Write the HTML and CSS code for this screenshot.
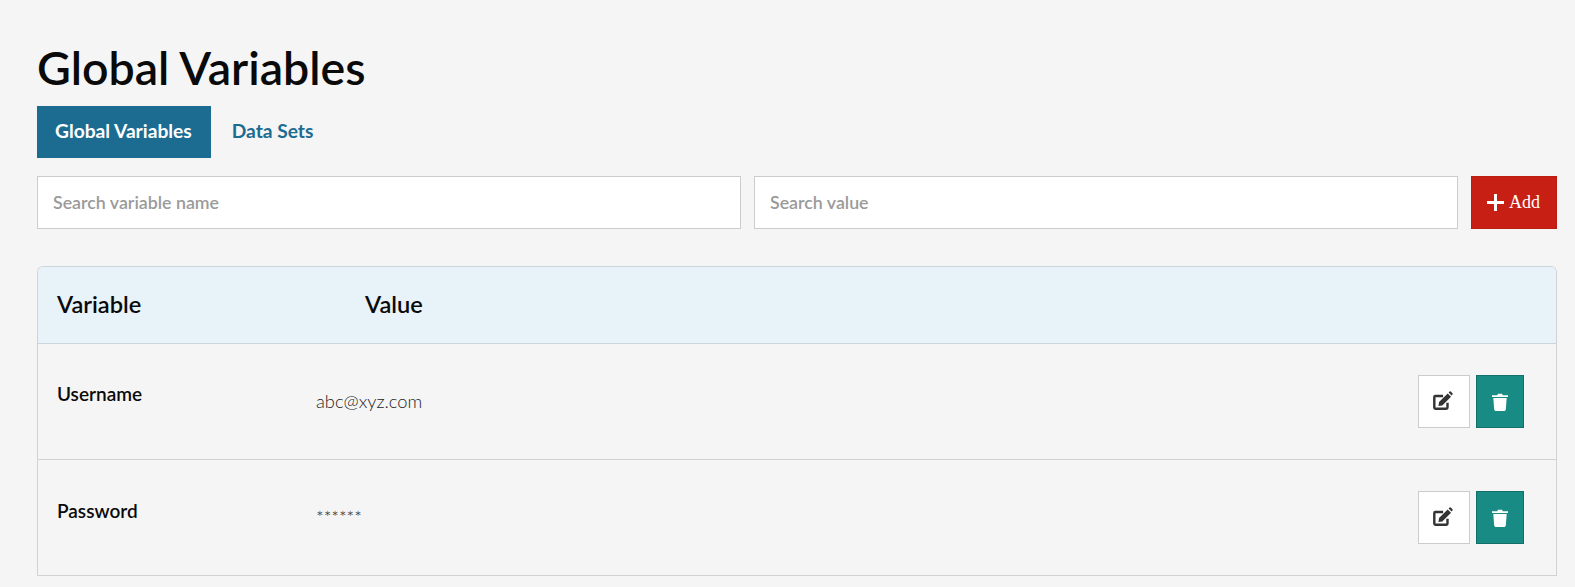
FILE: index.html
```html
<!DOCTYPE html>
<html lang="en">
<head>
<meta charset="utf-8">
<title>Global Variables</title>
<link rel="stylesheet" href="styles.css">
</head>
<body>
<main class="page">
  <h1 class="title">Global Variables</h1>
  <nav class="tabs">
    <a class="tab tab-active">Global Variables</a>
    <a class="tab">Data Sets</a>
  </nav>
  <div class="filters">
    <input class="search" type="text" placeholder="Search variable name">
    <input class="search" type="text" placeholder="Search value">
    <button class="add" type="button">
      <svg class="add-icon" viewBox="0 0 16 16" width="17" height="17"><path fill="#fff" d="M6.600 0h2.800v6.600H16v2.800H9.400V16H6.600V9.400H0V6.600h6.600z"/></svg>
      <span>Add</span>
    </button>
  </div>
  <section class="card">
    <header class="card-head">
      <div class="head-var">Variable</div>
      <div class="head-val">Value</div>
    </header>
    <div class="row">
      <div class="name">Username</div>
      <div class="value">abc@xyz.com</div>
      <div class="actions">
        <button class="btn-edit" type="button">
          <svg class="edit-icon" viewBox="0 0 20 20" width="22" height="22"><path fill="none" stroke="#333" stroke-width="2.200" d="M15 11.500V16a1 1 0 0 1-1 1H4a1 1 0 0 1-1-1V6.500a1 1 0 0 1 1-1h7"/><path fill="#333" d="M7.300 11 15.200 3.100l3 3-7.900 7.900-3.500.5zM16 2.300l.9-.9a.8.8 0 0 1 1.100 0l1.500 1.500a.8.8 0 0 1 0 1.100l-.8.900z"/></svg>
        </button>
        <button class="btn-del" type="button">
          <svg viewBox="0 0 16 18" width="16" height="18"><path fill="#fff" d="M0 2.200h5.200L6 .7h4l.8 1.500H16v1.800H0zM1.300 5h13.400l-.9 11.500a1.500 1.500 0 0 1-1.500 1.400H3.700a1.500 1.500 0 0 1-1.500-1.400z"/></svg>
        </button>
      </div>
    </div>
    <div class="row">
      <div class="name name-low">Password</div>
      <div class="value value-mask">******</div>
      <div class="actions">
        <button class="btn-edit" type="button">
          <svg class="edit-icon" viewBox="0 0 20 20" width="22" height="22"><path fill="none" stroke="#333" stroke-width="2.200" d="M15 11.500V16a1 1 0 0 1-1 1H4a1 1 0 0 1-1-1V6.500a1 1 0 0 1 1-1h7"/><path fill="#333" d="M7.300 11 15.200 3.100l3 3-7.900 7.900-3.500.5zM16 2.300l.9-.9a.8.8 0 0 1 1.100 0l1.500 1.500a.8.8 0 0 1 0 1.100l-.8.900z"/></svg>
        </button>
        <button class="btn-del" type="button">
          <svg viewBox="0 0 16 18" width="16" height="18"><path fill="#fff" d="M0 2.200h5.200L6 .7h4l.8 1.500H16v1.800H0zM1.300 5h13.400l-.9 11.500a1.500 1.500 0 0 1-1.500 1.400H3.700a1.500 1.500 0 0 1-1.500-1.400z"/></svg>
        </button>
      </div>
    </div>
  </section>
</main>
</body>
</html>
```

FILE: styles.css
```css
* { box-sizing: border-box; }
html, body { margin: 0; height: 100%; overflow: hidden; }
body { background: #f5f5f5; color: #0a0a0a; font-family: Lato, "Liberation Sans", sans-serif; }
.page { padding: 39px 18px 0 37px; }
.title { margin: 0 0 11px; font-size: 46.500px; line-height: 56px; font-weight: 600; color: #0a0a0a; }
.tabs { display: flex; height: 52px; margin-bottom: 18px; }
.tab { display: flex; align-items: center; padding: 0 19px 4px 18px; font-size: 19.200px; font-weight: 700; color: #1c6c92; margin-right: 3px; }
.tab-active { background: #1c6c92; color: #fff; }
.filters { display: flex; gap: 13px; height: 53px; margin-bottom: 37px; }
.search { flex: 1 1 0; min-width: 0; height: 53px; padding: 0 15px 2px; border: 1px solid #ccc; background: #fff; font: 600 17.800px Lato, sans-serif; color: #333; outline: 0; }
.search::placeholder { color: #9a9a9a; opacity: 1; }
.add { flex: 0 0 86px; display: flex; align-items: center; justify-content: center; gap: 5px; padding: 0 1px 0 0; border: 1px solid #b81e12; background: #c81f14; color: #fff; font: 400 18px "Liberation Serif", serif; }
.add-icon { display: block; }
.card { border: 1px solid #d2d2d2; border-top-color: #c9d6e0; border-radius: 6px 6px 0 0; }
.card-head { display: flex; align-items: center; height: 77px; padding: 0 0 2px 19px; background: #e8f3f9; border-bottom: 1px solid #c9d6e0; border-radius: 5px 5px 0 0; font-size: 23.600px; font-weight: 600; }
.head-var { width: 308px; }
.row { display: flex; height: 116px; padding: 0 32px 0 19px; border-bottom: 1px solid #d2d2d2; }
.row:last-child { border-bottom: 0; height: 115px; }
.name { width: 259px; padding-top: 38px; font-size: 19px; line-height: 24px; font-weight: 600; }
.name-low { padding-top: 39px; }
.value { flex: 1; padding-top: 45px; font-size: 18.300px; line-height: 24px; font-weight: 300; color: #222; }
.value-mask { font-size: 18px; padding-top: 45px; }
.actions { display: flex; gap: 6px; padding-top: 31px; }
.btn-edit, .btn-del { display: flex; align-items: center; justify-content: center; height: 53px; padding: 0; }
.btn-edit { width: 52px; background: #fff; border: 1px solid #ccc; }
.edit-icon { margin: 0 4px 2px 0; }
.btn-del { width: 48px; background: #188c84; border: 1px solid #137069; }
```
